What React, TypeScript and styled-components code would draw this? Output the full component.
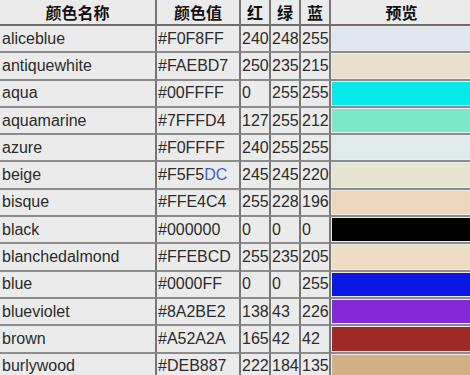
import React from 'react';
import styled, { createGlobalStyle } from 'styled-components';

const GlobalStyle = createGlobalStyle`
  html, body {
    margin: 0;
    padding: 0;
    background: #ebebeb;
  }
`;

interface ColorRow {
  name: string;
  hex: string;
  r: string;
  g: string;
  b: string;
  swatch: string;
}

const rows: ColorRow[] = [
  { name: 'aliceblue', hex: '#F0F8FF', r: '240', g: '248', b: '255', swatch: '#dfe6ef' },
  { name: 'antiquewhite', hex: '#FAEBD7', r: '250', g: '235', b: '215', swatch: '#e9dfcb' },
  { name: 'aqua', hex: '#00FFFF', r: '0', g: '255', b: '255', swatch: '#06e9ea' },
  { name: 'aquamarine', hex: '#7FFFD4', r: '127', g: '255', b: '212', swatch: '#7ae9c7' },
  { name: 'azure', hex: '#F0FFFF', r: '240', g: '255', b: '255', swatch: '#e0ecec' },
  { name: 'beige', hex: '#F5F5DC', r: '245', g: '245', b: '220', swatch: '#e5e4d0' },
  { name: 'bisque', hex: '#FFE4C4', r: '255', g: '228', b: '196', swatch: '#eed6bc' },
  { name: 'black', hex: '#000000', r: '0', g: '0', b: '0', swatch: '#000000' },
  { name: 'blanchedalmond', hex: '#FFEBCD', r: '255', g: '235', b: '205', swatch: '#eeddc3' },
  { name: 'blue', hex: '#0000FF', r: '0', g: '0', b: '255', swatch: '#0a17e6' },
  { name: 'blueviolet', hex: '#8A2BE2', r: '138', g: '43', b: '226', swatch: '#8329d6' },
  { name: 'brown', hex: '#A52A2A', r: '165', g: '42', b: '42', swatch: '#9d2a27' },
  { name: 'burlywood', hex: '#DEB887', r: '222', g: '184', b: '135', swatch: '#d3b084' },
];

const Table = styled.table`
  border-collapse: separate;
  border-spacing: 0;
  table-layout: fixed;
  width: 472px;
  font-family: 'Liberation Sans', Arial, sans-serif;
  font-size: 16px;
  color: #2b2b2b;
  background: #ebebeb;
`;

const Col = styled.col<{ $w?: number }>`
  width: ${(p) => (p.$w ? `${p.$w}px` : 'auto')};
`;

const HeadCell = styled.th<{ $last?: boolean }>`
  height: 25px;
  padding: 0;
  font-family: 'Noto Sans CJK SC', sans-serif;
  font-size: 16px;
  font-weight: bold;
  color: #111;
  text-align: center;
  border-right: ${(p) => (p.$last ? 'none' : '2px solid #767676')};
  border-bottom: 2px solid #6c6c6c;
  box-sizing: border-box;
`;

const Cell = styled.td<{ $pad?: number }>`
  height: 27.3px;
  padding: 0 0 0 ${(p) => p.$pad ?? 1}px;
  white-space: nowrap;
  overflow: hidden;
  border-right: 2px solid #767676;
  border-bottom: 2px solid #8c8c8c;
  box-sizing: border-box;
`;

const PreviewCell = styled.td`
  height: 27.3px;
  padding: 1px 0 1px 1px;
  border-bottom: 2px solid #8c8c8c;
  box-sizing: border-box;
`;

const Swatch = styled.div<{ $color: string }>`
  height: 100%;
  background: ${(p) => p.$color};
`;

const Accent = styled.span`
  color: #3d63c9;
`;

function HexValue({ hex }: { hex: string }) {
  if (hex === '#F5F5DC') {
    return (
      <>
        #F5F5<Accent>DC</Accent>
      </>
    );
  }
  return <>{hex}</>;
}

export default function App() {
  return (
    <>
      <GlobalStyle />
      <Table>
        <colgroup>
          <Col $w={157} />
          <Col $w={84} />
          <Col $w={30} />
          <Col $w={30} />
          <Col $w={30} />
          <Col />
        </colgroup>
        <thead>
          <tr>
            <HeadCell>颜色名称</HeadCell>
            <HeadCell>颜色值</HeadCell>
            <HeadCell>红</HeadCell>
            <HeadCell>绿</HeadCell>
            <HeadCell>蓝</HeadCell>
            <HeadCell $last>预览</HeadCell>
          </tr>
        </thead>
        <tbody>
          {rows.map((row) => (
            <tr key={row.name}>
              <Cell $pad={2}>{row.name}</Cell>
              <Cell>
                <HexValue hex={row.hex} />
              </Cell>
              <Cell>{row.r}</Cell>
              <Cell>{row.g}</Cell>
              <Cell>{row.b}</Cell>
              <PreviewCell>
                <Swatch $color={row.swatch} />
              </PreviewCell>
            </tr>
          ))}
        </tbody>
      </Table>
    </>
  );
}
